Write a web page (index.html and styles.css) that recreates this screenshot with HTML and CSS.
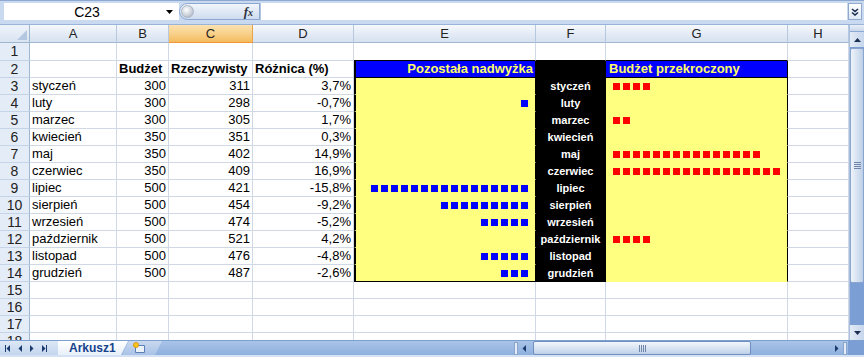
FILE: index.html
```html
<!doctype html>
<html>
    <head>
        <title>Arkusz1</title>
        <link rel="stylesheet" href="styles.css">
    </head>
    <body>
        <div class="excel">
            <div class="formula-bar">
                <div class="name-box">
                    <span class="name">C23</span>
                    <svg class="drop" width="7" height="4" viewBox="0 0 7 4"><path d="M0 0h7L3.5 4z" fill="#000"/></svg>
                </div>
                <div class="fx-pill">
                    <span class="knob"></span>
                    <span class="fx">f<small>x</small></span>
                </div>
                <div class="formula-input"></div>
                <div class="expand">
                    <svg width="8" height="8" viewBox="0 0 8 8"><path d="M1 1l3 2.5L7 1M1 4.5L4 7l3-2.5" stroke="#1b2f52" stroke-width="1.6" fill="none"/></svg>
                </div>
            </div>

            <div class="workarea">
                <div class="sheet">
                    <div class="row colhead">
                        <div class="corner"></div>
                        <div class="ch">A</div>
                        <div class="ch">B</div>
                        <div class="ch active">C</div>
                        <div class="ch">D</div>
                        <div class="ch">E</div>
                        <div class="ch">F</div>
                        <div class="ch">G</div>
                        <div class="ch">H</div>
                    </div>

                    <div class="row tall">
                        <div class="rh">1</div>
                        <div class="c"></div><div class="c"></div><div class="c"></div><div class="c"></div>
                        <div class="c frame-top"></div><div class="c frame-top"></div><div class="c frame-top"></div>
                        <div class="c"></div>
                    </div>

                    <div class="row">
                        <div class="rh">2</div>
                        <div class="c"></div>
                        <div class="c b">Budżet</div>
                        <div class="c b">Rzeczywisty</div>
                        <div class="c b">Różnica (%)</div>
                        <div class="c surplus head">Pozostała nadwyżka</div>
                        <div class="c label"></div>
                        <div class="c overrun head">Budżet przekroczony</div>
                        <div class="c"></div>
                    </div>

                    <div class="row">
                        <div class="rh">3</div>
                        <div class="c">styczeń</div>
                        <div class="c num">300</div>
                        <div class="c num">311</div>
                        <div class="c num">3,7%</div>
                        <div class="c surplus"></div>
                        <div class="c label">styczeń</div>
                        <div class="c overrun"><span class="bar red" style="--n:4"></span></div>
                        <div class="c"></div>
                    </div>

                    <div class="row">
                        <div class="rh">4</div>
                        <div class="c">luty</div>
                        <div class="c num">300</div>
                        <div class="c num">298</div>
                        <div class="c num">-0,7%</div>
                        <div class="c surplus"><span class="bar blue" style="--n:1"></span></div>
                        <div class="c label">luty</div>
                        <div class="c overrun"></div>
                        <div class="c"></div>
                    </div>

                    <div class="row">
                        <div class="rh">5</div>
                        <div class="c">marzec</div>
                        <div class="c num">300</div>
                        <div class="c num">305</div>
                        <div class="c num">1,7%</div>
                        <div class="c surplus"></div>
                        <div class="c label">marzec</div>
                        <div class="c overrun"><span class="bar red" style="--n:2"></span></div>
                        <div class="c"></div>
                    </div>

                    <div class="row">
                        <div class="rh">6</div>
                        <div class="c">kwiecień</div>
                        <div class="c num">350</div>
                        <div class="c num">351</div>
                        <div class="c num">0,3%</div>
                        <div class="c surplus"></div>
                        <div class="c label">kwiecień</div>
                        <div class="c overrun"></div>
                        <div class="c"></div>
                    </div>

                    <div class="row">
                        <div class="rh">7</div>
                        <div class="c">maj</div>
                        <div class="c num">350</div>
                        <div class="c num">402</div>
                        <div class="c num">14,9%</div>
                        <div class="c surplus"></div>
                        <div class="c label">maj</div>
                        <div class="c overrun"><span class="bar red" style="--n:15"></span></div>
                        <div class="c"></div>
                    </div>

                    <div class="row">
                        <div class="rh">8</div>
                        <div class="c">czerwiec</div>
                        <div class="c num">350</div>
                        <div class="c num">409</div>
                        <div class="c num">16,9%</div>
                        <div class="c surplus"></div>
                        <div class="c label">czerwiec</div>
                        <div class="c overrun"><span class="bar red" style="--n:17"></span></div>
                        <div class="c"></div>
                    </div>

                    <div class="row">
                        <div class="rh">9</div>
                        <div class="c">lipiec</div>
                        <div class="c num">500</div>
                        <div class="c num">421</div>
                        <div class="c num">-15,8%</div>
                        <div class="c surplus"><span class="bar blue" style="--n:16"></span></div>
                        <div class="c label">lipiec</div>
                        <div class="c overrun"></div>
                        <div class="c"></div>
                    </div>

                    <div class="row">
                        <div class="rh">10</div>
                        <div class="c">sierpień</div>
                        <div class="c num">500</div>
                        <div class="c num">454</div>
                        <div class="c num">-9,2%</div>
                        <div class="c surplus"><span class="bar blue" style="--n:9"></span></div>
                        <div class="c label">sierpień</div>
                        <div class="c overrun"></div>
                        <div class="c"></div>
                    </div>

                    <div class="row">
                        <div class="rh">11</div>
                        <div class="c">wrzesień</div>
                        <div class="c num">500</div>
                        <div class="c num">474</div>
                        <div class="c num">-5,2%</div>
                        <div class="c surplus"><span class="bar blue" style="--n:5"></span></div>
                        <div class="c label">wrzesień</div>
                        <div class="c overrun"></div>
                        <div class="c"></div>
                    </div>

                    <div class="row">
                        <div class="rh">12</div>
                        <div class="c">październik</div>
                        <div class="c num">500</div>
                        <div class="c num">521</div>
                        <div class="c num">4,2%</div>
                        <div class="c surplus"></div>
                        <div class="c label">październik</div>
                        <div class="c overrun"><span class="bar red" style="--n:4"></span></div>
                        <div class="c"></div>
                    </div>

                    <div class="row">
                        <div class="rh">13</div>
                        <div class="c">listopad</div>
                        <div class="c num">500</div>
                        <div class="c num">476</div>
                        <div class="c num">-4,8%</div>
                        <div class="c surplus"><span class="bar blue" style="--n:5"></span></div>
                        <div class="c label">listopad</div>
                        <div class="c overrun"></div>
                        <div class="c"></div>
                    </div>

                    <div class="row">
                        <div class="rh">14</div>
                        <div class="c">grudzień</div>
                        <div class="c num">500</div>
                        <div class="c num">487</div>
                        <div class="c num">-2,6%</div>
                        <div class="c surplus last"><span class="bar blue" style="--n:3"></span></div>
                        <div class="c label last">grudzień</div>
                        <div class="c overrun"></div>
                        <div class="c"></div>
                    </div>

                    <div class="row">
                        <div class="rh">15</div>
                        <div class="c"></div><div class="c"></div><div class="c"></div><div class="c"></div>
                        <div class="c"></div><div class="c"></div><div class="c"></div><div class="c"></div>
                    </div>
                    <div class="row">
                        <div class="rh">16</div>
                        <div class="c"></div><div class="c"></div><div class="c"></div><div class="c"></div>
                        <div class="c"></div><div class="c"></div><div class="c"></div><div class="c"></div>
                    </div>
                    <div class="row">
                        <div class="rh">17</div>
                        <div class="c"></div><div class="c"></div><div class="c"></div><div class="c"></div>
                        <div class="c"></div><div class="c"></div><div class="c"></div><div class="c"></div>
                    </div>
                    <div class="row">
                        <div class="rh">18</div>
                        <div class="c"></div><div class="c"></div><div class="c"></div><div class="c"></div>
                        <div class="c"></div><div class="c"></div><div class="c"></div><div class="c"></div>
                    </div>
                </div>

                <div class="vscroll">
                    <div class="split"></div>
                    <div class="sbtn">
                        <svg width="7" height="4" viewBox="0 0 7 4"><path d="M0 4h7L3.5 0z" fill="#1b2f52"/></svg>
                    </div>
                    <div class="vthumb"><span class="grip-h"></span></div>
                    <div class="vtrack"></div>
                    <div class="sbtn">
                        <svg width="7" height="4" viewBox="0 0 7 4"><path d="M0 0h7L3.5 4z" fill="#1b2f52"/></svg>
                    </div>
                </div>
            </div>

            <div class="tabbar">
                <div class="tab-nav">
                    <svg width="5" height="7" viewBox="0 0 5 7"><path d="M0 0h1v7H0zM5 0v7L1.5 3.5z" fill="#1b3a6e"/></svg>
                    <svg width="4" height="7" viewBox="0 0 4 7"><path d="M4 0v7L0.5 3.5z" fill="#1b3a6e"/></svg>
                    <svg width="4" height="7" viewBox="0 0 4 7"><path d="M0 0v7L3.5 3.5z" fill="#1b3a6e"/></svg>
                    <svg width="5" height="7" viewBox="0 0 5 7"><path d="M0 0v7L3.5 3.5zM4 0h1v7H4z" fill="#1b3a6e"/></svg>
                </div>
                <div class="tab">Arkusz1</div>
                <div class="tab-new">
                    <svg width="14" height="12" viewBox="0 0 14 12">
                        <path d="M3.5 3.5h9v7h-9z" fill="#eaf1fb" stroke="#5b7fb8"/>
                        <circle cx="4" cy="3" r="2.6" fill="#f6c31e" stroke="#d88a08" stroke-width="0.7"/>
                    </svg>
                </div>
                <div class="tab-fill"></div>
                <div class="hscroll">
                    <span class="hsplit"></span>
                    <svg width="4" height="7" viewBox="0 0 4 7"><path d="M4 0v7L0.5 3.5z" fill="#1b3a6e"/></svg>
                    <div class="hthumb"><span class="grip-v"></span></div>
                    <div class="htrack"></div>
                    <svg width="4" height="7" viewBox="0 0 4 7"><path d="M0 0v7L3.5 3.5z" fill="#1b3a6e"/></svg>
                    <span class="hsplit"></span>
                </div>
                <div class="size-corner"></div>
            </div>
        </div>
    </body>
</html>
```

FILE: styles.css
```css
* {
    box-sizing: border-box;
}
body {
    margin: 0;
    font-family: "Liberation Sans", Arial, sans-serif;
    font-size: 13px;
    color: #000;
    background: #fff;
}
.excel {
    width: 864px;
    height: 357px;
    overflow: hidden;
    display: flex;
    flex-direction: column;
    background: #c4d6ee;
}

/* FORMULA BAR */
.formula-bar {
    height: 25px;
    flex: none;
    display: flex;
    padding: 2px 2px 4px 4px;
    background: #c9daf0;
    border-top: 1px solid #8ea9d1;
    border-bottom: 1px solid #9ab3d8;
}
.name-box {
    width: 175px;
    display: flex;
    align-items: center;
    background: #fff;
}
.name {
    flex: 1;
    text-align: center;
    font-size: 14px;
    padding-left: 4px;
}
.drop {
    margin-right: 6px;
}
.fx-pill {
    width: 81px;
    display: flex;
    align-items: center;
    justify-content: space-between;
    padding: 0 6px 0 1px;
    border: 1px solid #8ba8d0;
    border-radius: 9px 0 0 9px;
    background: linear-gradient(#f2f6fb, #cedbee);
}
.knob {
    width: 13px;
    height: 13px;
    border-radius: 50%;
    background: radial-gradient(circle at 40% 35%, #ffffff, #c8ced8 60%, #9aa5b5);
    border: 1px solid #aab6c8;
}
.fx {
    font-family: "Liberation Serif", serif;
    font-style: italic;
    font-weight: bold;
    font-size: 13px;
    color: #2d3440;
}
.fx small {
    font-size: 10px;
}
.formula-input {
    flex: 1;
    background: #fff;
    border-left: 1px solid #b3c6e1;
}
.expand {
    width: 14px;
    margin-left: 1px;
    display: flex;
    align-items: center;
    justify-content: center;
    border: 1px solid #8fa9cf;
    background: linear-gradient(#ffffff, #dde7f4);
}

/* SHEET */
.workarea {
    flex: 1;
    display: flex;
    min-height: 0;
}
.sheet {
    width: 849px;
    overflow: hidden;
    background: #fff;
}
.row {
    display: grid;
    grid-template-columns: 30px 87px 52px 84px 101px 182px 70px 182px 61px;
    height: 17px;
}
.row.tall,
.row.colhead {
    height: 18px;
}
.c {
    border-right: 1px solid #d0d7e5;
    border-bottom: 1px solid #d0d7e5;
    padding: 0 2px;
    line-height: 16px;
    white-space: nowrap;
    overflow: hidden;
}
.b {
    font-weight: bold;
}
.num {
    text-align: right;
}

/* HEADERS */
.corner {
    background: linear-gradient(#eef3fa, #d9e4f2);
    border-right: 1px solid #9eb6ce;
    border-bottom: 1px solid #9eb6ce;
    display: flex;
    justify-content: flex-end;
    align-items: flex-end;
    padding: 0 2px 2px 0;
}
.corner::after {
    content: "";
    width: 0;
    height: 0;
    border-left: 10px solid transparent;
    border-bottom: 10px solid #b4c7e1;
}
.ch {
    text-align: center;
    line-height: 17px;
    color: #222;
    background: linear-gradient(#f6f9fd, #e1e9f4 60%, #d6e1f0);
    border-right: 1px solid #b6c8df;
    border-bottom: 1px solid #9eb6ce;
}
.ch.active {
    background: linear-gradient(#fbe2b2, #f8cf86 55%, #f4bb5e);
    border-right-color: #eaa24c;
    border-bottom-color: #f29536;
}
.rh {
    text-align: center;
    font-size: 14px;
    line-height: 16px;
    color: #222;
    background: #e4ecf7;
    border-right: 1px solid #9eb6ce;
    border-bottom: 1px solid #c5d4e8;
}

/* CHART BLOCK E2:G14 */
.frame-top {
    border-bottom-color: #000;
}
.surplus {
    background: #ffff80;
    border-left: 2px solid #000;
    border-right-color: #000;
    border-bottom-color: #ffff80;
    display: flex;
    justify-content: flex-end;
    align-items: center;
    padding-right: 7px;
}
.surplus.last {
    border-bottom-color: #000;
}
.label {
    background: #000;
    color: #fff;
    font-weight: bold;
    font-size: 11px;
    text-align: center;
    border-color: #000;
    padding: 0;
}
.overrun {
    background: #ffff80;
    border-right-color: #000;
    border-bottom-color: #ffff80;
    display: flex;
    align-items: center;
    padding-left: 7px;
}
.surplus.head,
.overrun.head {
    display: block;
    background: #0000ff;
    color: #ffff66;
    font-weight: bold;
    border-bottom-color: #000;
}
.surplus.head {
    text-align: right;
    padding-right: 2px;
}
.overrun.head {
    padding-left: 3px;
}
.bar {
    height: 7px;
    width: calc(var(--n) * 10px - 3px);
    background: repeating-linear-gradient(to right, currentColor 0 7px, transparent 7px 10px);
}
.bar.blue {
    color: #0000ff;
}
.bar.red {
    color: #ff0000;
}

/* VERTICAL SCROLLBAR */
.vscroll {
    width: 15px;
    display: flex;
    flex-direction: column;
    background: #7b9fd4;
    border-left: 1px solid #a9bfdf;
}
.split {
    height: 7px;
    background: linear-gradient(#e9eff8, #c9d7eb);
    border-bottom: 1px solid #8da8d0;
}
.sbtn {
    height: 15px;
    display: flex;
    align-items: center;
    justify-content: center;
    background: linear-gradient(to right, #e3ebf6, #c7d6ec);
}
.vthumb {
    height: 235px;
    margin: 1px 0;
    display: flex;
    align-items: center;
    justify-content: center;
    border: 1px solid #8aa5cd;
    border-radius: 2px;
    background: linear-gradient(to right, #eef3fa, #d2dfef 60%, #bccfe8);
}
.grip-h {
    width: 7px;
    height: 7px;
    background: repeating-linear-gradient(#6f86a8 0 1px, transparent 1px 2px);
}
.vtrack {
    flex: 1;
}

/* SHEET TABS */
.tabbar {
    height: 17px;
    flex: none;
    display: flex;
    align-items: stretch;
    background: linear-gradient(#a9c3e8, #8eb0dd);
    border-top: 1px solid #7d9fd0;
    border-bottom: 2px solid #d5e2f3;
}
.tab-nav {
    width: 58px;
    display: flex;
    align-items: center;
    gap: 8px;
    padding-left: 5px;
    background: linear-gradient(#dde8f6, #c3d5ee);
}
.tab {
    width: 70px;
    padding-left: 11px;
    font-weight: bold;
    font-size: 12px;
    line-height: 14px;
    color: #15428b;
    background: linear-gradient(#ffffff, #e9f0f9);
    clip-path: polygon(0 0, 100% 0, calc(100% - 7px) 100%, 0 100%);
}
.tab-new {
    width: 40px;
    margin-left: -6px;
    padding-left: 10px;
    display: flex;
    align-items: center;
    background: linear-gradient(#c9d9ef, #a9c2e6);
    clip-path: polygon(7px 0, 100% 0, calc(100% - 7px) 100%, 0 100%);
}
.tab-fill {
    flex: 1;
}
.hscroll {
    width: 334px;
    display: flex;
    align-items: center;
    gap: 4px;
    padding: 0 1px 0 0;
}
.hsplit {
    width: 4px;
    height: 13px;
    background: #e6edf7;
    border: 1px solid #8aa5cd;
}
.hthumb {
    width: 218px;
    height: 14px;
    margin-left: 3px;
    display: flex;
    align-items: center;
    justify-content: center;
    border: 1px solid #6f8fc0;
    border-radius: 2px;
    background: linear-gradient(#f2f6fb, #d6e2f1 55%, #bed0e9);
}
.grip-v {
    width: 7px;
    height: 7px;
    background: repeating-linear-gradient(to right, #6f86a8 0 1px, transparent 1px 2px);
}
.htrack {
    flex: 1;
}
.size-corner {
    width: 16px;
    background: #7b9fd4;
}
```
